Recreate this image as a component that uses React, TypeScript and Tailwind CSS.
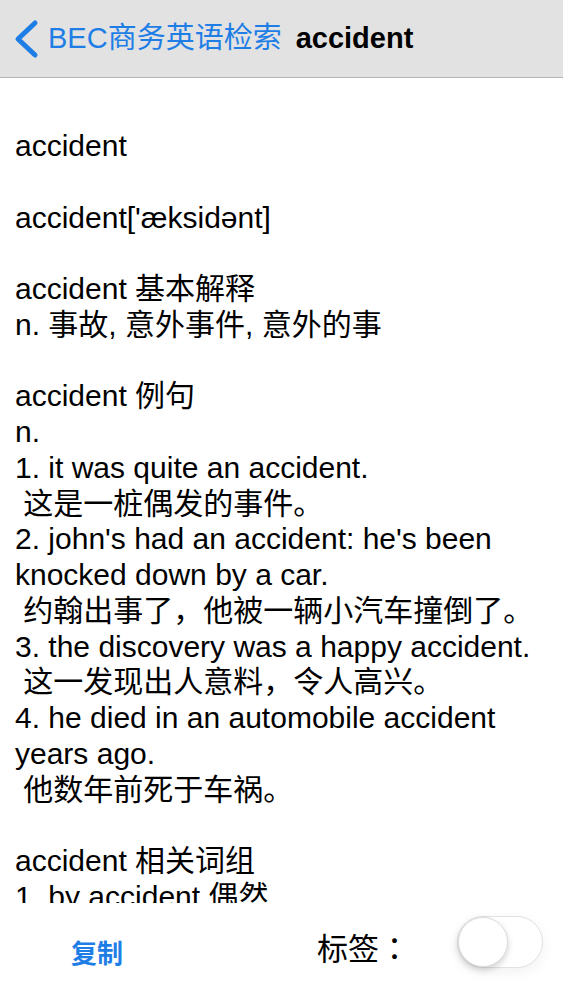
import React from 'react';

const lines = [
  'accident',
  '',
  "accident['æksidənt]",
  '',
  'accident 基本解释',
  'n. 事故, 意外事件, 意外的事',
  '',
  'accident 例句',
  'n.',
  '1. it was quite an accident.',
  ' 这是一桩偶发的事件。',
  "2. john's had an accident: he's been knocked down by a car.",
  ' 约翰出事了，他被一辆小汽车撞倒了。',
  '3. the discovery was a happy accident.',
  ' 这一发现出人意料，令人高兴。',
  '4. he died in an automobile accident years ago.',
  ' 他数年前死于车祸。',
  '',
  'accident 相关词组',
  '1. by accident 偶然',
];

const Toggle: React.FC<{ on: boolean; onChange: (v: boolean) => void }> = ({ on, onChange }) => (
  <button
    onClick={() => onChange(!on)}
    className={`relative w-[86px] h-[52px] rounded-full border border-[#e2e2e2] shadow-[0_4px_14px_rgba(0,0,0,0.06)] transition-colors ${
      on ? 'bg-[#4cd964]' : 'bg-white'
    }`}
  >
    <span
      className={`absolute top-[0px] w-[50px] h-[50px] rounded-full bg-white border border-[#dcdcdc] shadow-[0_3px_6px_rgba(0,0,0,0.18)] transition-all ${
        on ? 'left-[34px]' : 'left-[0px]'
      }`}
    />
  </button>
);

export default function App() {
  const [tagged, setTagged] = React.useState(false);

  return (
    <div className="w-[563px] h-[1000px] bg-white flex flex-col overflow-hidden font-['Liberation_Sans','Noto_Sans_CJK_SC',sans-serif]">
      {/* nav bar */}
      <div className="h-[78px] shrink-0 bg-[#e2e2e2] border-b border-[#b4b4b4] flex items-center pl-[13px]">
        <svg width="26" height="40" viewBox="0 0 26 40" className="shrink-0">
          <polyline
            points="22,4 5,20 22,36"
            fill="none"
            stroke="#1e7ee6"
            strokeWidth="5"
            strokeLinecap="round"
            strokeLinejoin="round"
          />
        </svg>
        <span className="ml-[9px] text-[29px] text-[#1e7ee6] leading-none">BEC商务英语检索</span>
        <span className="ml-[14px] text-[29px] font-bold text-black leading-none">accident</span>
      </div>

      {/* definition text, clipped at the toolbar */}
      <div className="h-[825px] shrink-0 overflow-hidden pt-[50px] px-[15px]">
        {lines.map((line, i) => (
          <p key={i} className="text-[30px] leading-[35.75px] text-black whitespace-pre-wrap">
            {line === '' ? '\u00a0' : line}
          </p>
        ))}
      </div>

      {/* bottom toolbar */}
      <div className="flex-1 bg-white flex items-start">
        <button className="ml-[71px] mt-[37px] text-[26px] leading-[28px] font-bold text-[#1e7ee6]">复制</button>
        <span className="ml-[194px] mt-[28px] text-[31px] leading-[32px] text-black">
          标签<span className="font-['Noto_Sans_CJK_TC',sans-serif]">：</span>
        </span>
        <div className="ml-[47px] mt-[13px]">
          <Toggle on={tagged} onChange={setTagged} />
        </div>
      </div>
    </div>
  );
}
